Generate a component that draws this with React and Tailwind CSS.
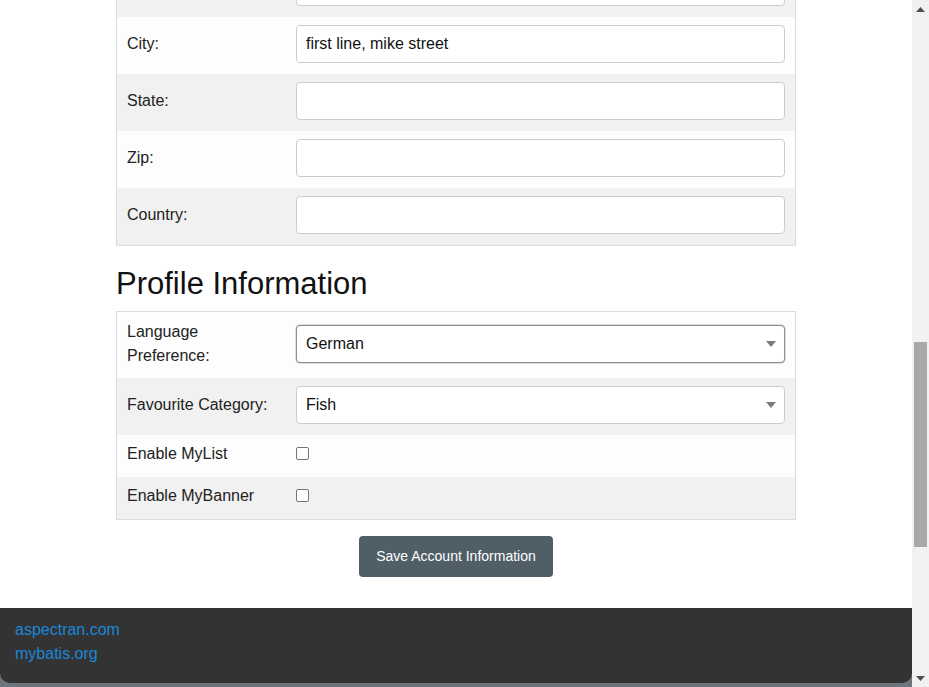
import React from "react"

const font = { fontFamily: '"Liberation Sans", Arial, sans-serif' }

function TextRow({ label, value, grey, first }) {
  return (
    <div className={`flex items-center h-[57px] pt-[8px] pb-[11px] ${grey ? "bg-[#f1f1f1]" : "bg-[#fdfdfd]"} ${first ? "-mt-[40px]" : ""}`}>
      <div className="w-[179px] pl-[10px] text-[16px] text-[#222]">{label}</div>
      <div className="flex-1 pr-[10px]">
        <div className="h-[38px] w-full rounded-[4px] border border-[#cccccc] bg-white px-[9px] flex items-center text-[16px] text-[#111]">
          {value}
        </div>
      </div>
    </div>
  )
}

function SelectBox({ value, focused }) {
  return (
    <div
      className={`h-[38px] w-full rounded-[4px] border bg-white pl-[9px] pr-[8px] flex items-center justify-between text-[16px] text-[#111] ${
        focused ? "border-[#8f8f8f] shadow-[0_0_0_0.5px_#bdbdbd]" : "border-[#cccccc]"
      }`}
    >
      <span>{value}</span>
      <svg width="10" height="6" viewBox="0 0 10 6">
        <path d="M0 0h10L5 6z" fill="#7a7a7a" />
      </svg>
    </div>
  )
}

function Checkbox() {
  return <div className="w-[13px] h-[13px] rounded-[2px] border border-[#767676] bg-white" />
}

export default function App() {
  return (
    <div className="flex h-[687px] w-[929px] overflow-hidden bg-white" style={font}>
      <div className="w-[912px] flex flex-col">
        <div className="flex-1 overflow-hidden">
          <div className="w-[680px] ml-[116px]">
            <div className="border border-[#dddddd] border-t-0 overflow-hidden">
              <TextRow label="" value="" grey first />
              <TextRow label="City:" value="first line, mike street" />
              <TextRow label="State:" value="" grey />
              <TextRow label="Zip:" value="" />
              <TextRow label="Country:" value="" grey />
            </div>

            <h2 className="text-[31px] leading-[36px] text-[#111] mt-[20px] mb-[9px]">Profile Information</h2>

            <div className="border border-[#dddddd]">
              <div className="flex items-center h-[66px] pb-[2px] bg-[#fdfdfd]">
                <div className="w-[179px] pl-[10px] text-[16px] leading-[24px] text-[#222]">
                  Language
                  <br />
                  Preference:
                </div>
                <div className="flex-1 pr-[10px]">
                  <SelectBox value="German" focused />
                </div>
              </div>
              <div className="flex items-center h-[57px] pt-[8px] pb-[11px] bg-[#f1f1f1]">
                <div className="w-[179px] pl-[10px] text-[16px] text-[#222]">Favourite Category:</div>
                <div className="flex-1 pr-[10px]">
                  <SelectBox value="Fish" />
                </div>
              </div>
              <div className="flex items-center h-[42px] pb-[5px] bg-[#fdfdfd]">
                <div className="w-[179px] pl-[10px] text-[16px] text-[#222]">Enable MyList</div>
                <Checkbox />
              </div>
              <div className="flex items-center h-[42px] pb-[5px] bg-[#f1f1f1]">
                <div className="w-[179px] pl-[10px] text-[16px] text-[#222]">Enable MyBanner</div>
                <Checkbox />
              </div>
            </div>

            <div className="flex justify-center mt-[16px]">
              <button className="h-[41px] px-[17px] rounded-[4px] bg-[#4f5e67] text-white text-[14px]">
                Save Account Information
              </button>
            </div>
          </div>
        </div>
        <div className="h-[79px] bg-[#6b757b] shrink-0">
          <div className="h-[75px] bg-[#333333] rounded-b-[10px] px-[15px] pt-[10px] text-[16px] leading-[24px]">
            <a className="block text-[#1a87d8] w-fit">aspectran.com</a>
            <a className="block text-[#1a87d8] w-fit">mybatis.org</a>
          </div>
        </div>
      </div>
      <div className="w-[17px] bg-[#f1f1f1] flex flex-col items-center justify-between">
        <svg width="9" height="5" viewBox="0 0 9 5" className="mt-[7px]">
          <path d="M0 5h9L4.5 0z" fill="#505050" />
        </svg>
        <div className="flex-1 w-full flex flex-col">
          <div className="h-[330px]" />
          <div className="mx-[2px] h-[205px] bg-[#a8a8a8]" />
        </div>
        <svg width="9" height="5" viewBox="0 0 9 5" className="mb-[6px]">
          <path d="M0 0h9L4.5 5z" fill="#505050" />
        </svg>
      </div>
    </div>
  )
}
